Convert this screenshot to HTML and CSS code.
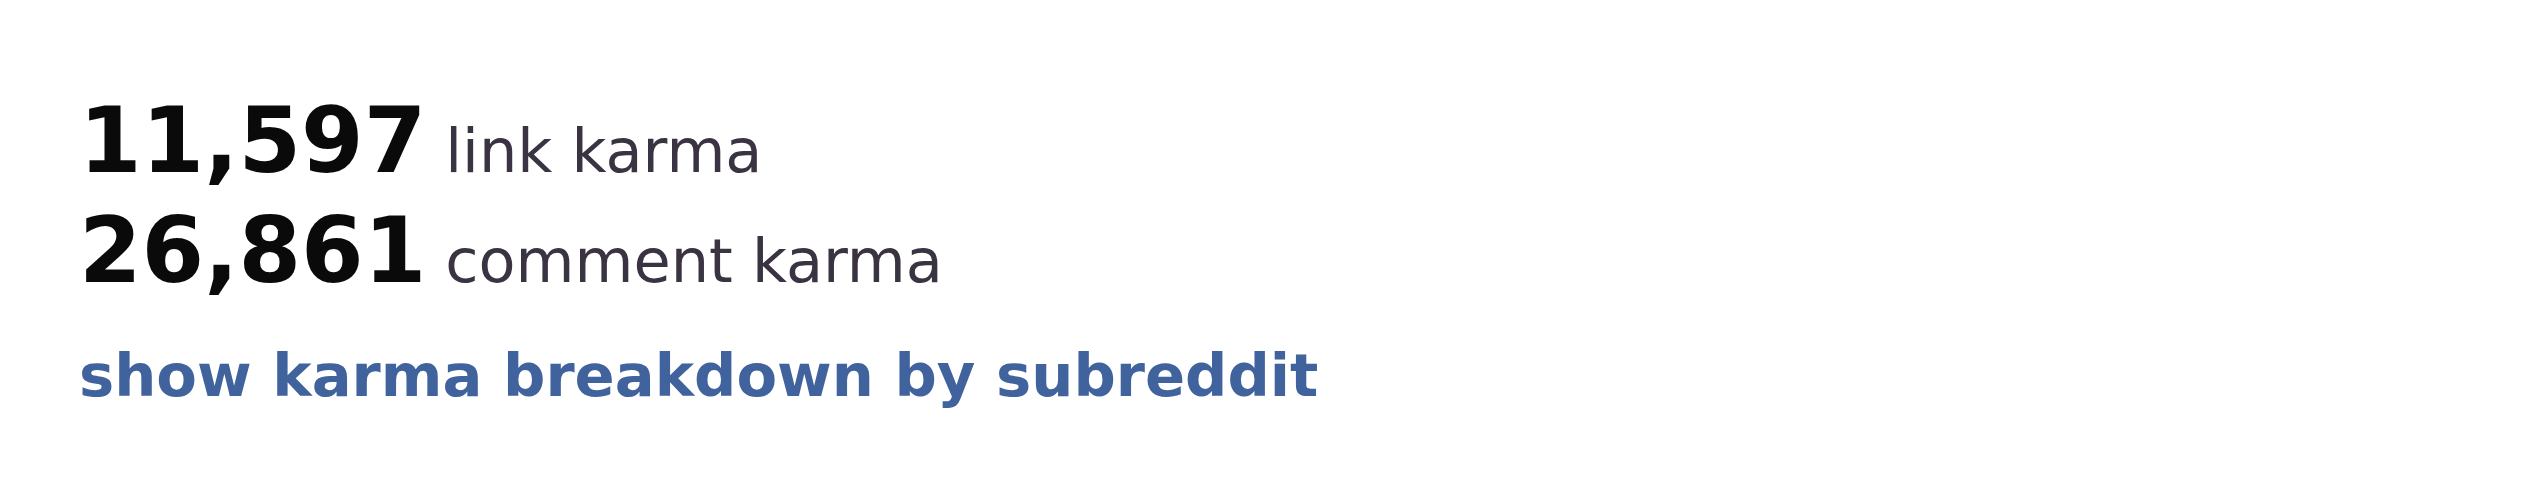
FILE: index.html
```html
<!DOCTYPE html>
<html lang="en">
<head>
<meta charset="utf-8">
<title>karma</title>
<link rel="stylesheet" href="styles.css">
</head>
<body>
  <div class="karma-box">
    <div class="karma-row">
      <span class="karma-num">11,597</span>
      <span class="karma-label">link karma</span>
    </div>
    <div class="karma-row">
      <span class="karma-num">26,861</span>
      <span class="karma-label">comment karma</span>
    </div>
    <div class="breakdown">
      <a class="breakdown-link" href="#">show karma breakdown by subreddit</a>
    </div>
  </div>
</body>
</html>
```

FILE: styles.css
```css
html, body {
  margin: 0;
  padding: 0;
  background: #ffffff;
}

body {
  font-family: "DejaVu Sans", Verdana, sans-serif;
  width: 2548px;
  height: 492px;
  overflow: hidden;
}

.karma-box {
  padding: 86px 0 0 79px;
}

.karma-row {
  display: flex;
  align-items: baseline;
  gap: 19px;
  height: 110px;
  line-height: 110px;
}

.karma-num {
  font-size: 90px;
  font-weight: bold;
  color: #0a0a0a;
}

.karma-label {
  font-size: 60.5px;
  line-height: 64px;
  color: #3a3342;
}

.breakdown {
  margin-top: 40px;
  line-height: 60px;
}

.breakdown-link {
  font-size: 59.2px;
  font-weight: bold;
  color: #40639d;
  text-decoration: none;
}
```
